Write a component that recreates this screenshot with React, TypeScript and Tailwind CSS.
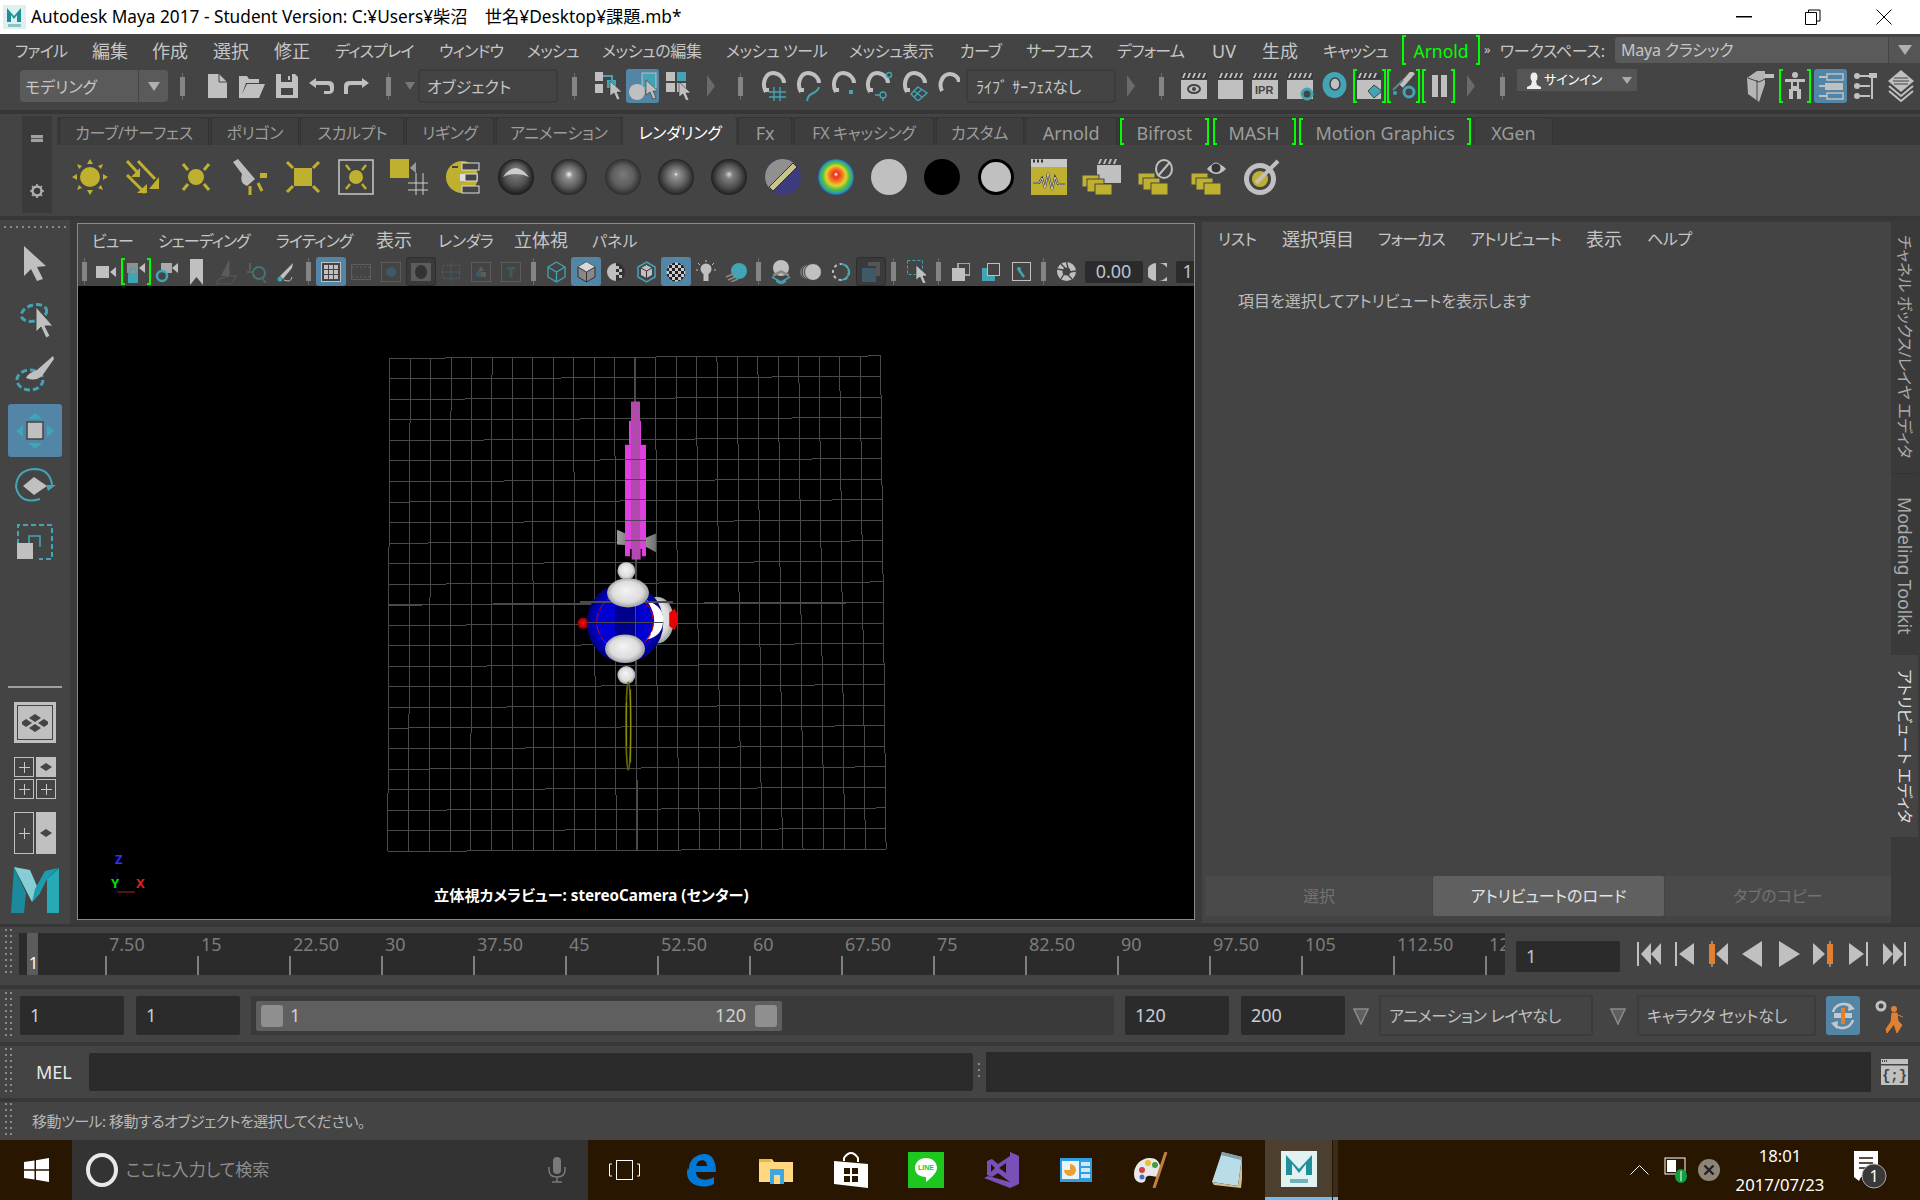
import React from "react";

const G = "#c0c0c0";
const T = "#41a5b5";
const Y = "#bfb030";
const O = "#e08030";

function Ic({ w, h, className = "", children }: { w: number; h: number; className?: string; children?: React.ReactNode }) {
  return (
    <svg width={w} height={h} viewBox={`0 0 ${w} ${h}`} fill="none" className={"shrink-0 " + className}>
      {children}
    </svg>
  );
}

// toolbar handle: thin line with a thicker bar over it
function Grip({ className = "w-[10px]" }: { className?: string }) {
  return (
    <div className={"flex justify-center shrink-0 " + className}>
      <div className="w-px h-[27px] bg-[#6a6a6a] flex items-center justify-center">
        <div className="w-[5px] h-[19px] shrink-0 bg-[#858585]" />
      </div>
    </div>
  );
}

function Dots({ h, className = "" }: { h: number; className?: string }) {
  const n = Math.floor(h / 6);
  return (
    <Ic w={7} h={h} className={className}>
      {Array.from({ length: n }).map((_, i) => (
        <g key={i} fill="#8a8a8a">
          <rect x={0} y={i * 6} width={2} height={2} />
          <rect x={5} y={i * 6} width={2} height={2} />
        </g>
      ))}
    </Ic>
  );
}

function HDots() {
  return (
    <Ic w={62} h={4}>
      {Array.from({ length: 11 }).map((_, i) => (
        <rect key={i} x={i * 6} y={1} width={2} height={2} fill="#8a8a8a" />
      ))}
    </Ic>
  );
}

function BrL() {
  return <div className="w-[4px] h-full shrink-0 border-l-2 border-y-2 border-[#00ff00]" />;
}
function BrR() {
  return <div className="w-[4px] h-full shrink-0 border-r-2 border-y-2 border-[#00ff00]" />;
}

function Cursor({ x, y, s = 1 }: { x: number; y: number; s?: number }) {
  return (
    <path
      transform={`translate(${x} ${y}) scale(${s})`}
      d="M0 0 L0 15 L4 12 L7 19 L10 18 L7 11 L12 11 Z"
      fill={G}
      stroke="#333"
      strokeWidth="0.6"
    />
  );
}

function Magnet({ children }: { children?: React.ReactNode }) {
  return (
    <>
      <path d="M5 21 C0 12 5 2 12 2 C18 2 23 7 23 12" stroke={G} strokeWidth="4" />
      <rect x="3" y="17" width="5" height="4" fill={G} />
      {children}
    </>
  );
}

function Clapper({ w = 28, children }: { w?: number; children?: React.ReactNode }) {
  return (
    <Ic w={w} h={30}>
      <rect x="1" y="2" width="26" height="6" fill="#3a3a3a" />
      {[2, 7, 12, 17, 22].map((x) => (
        <path key={x} d={`M${x} 7 L${x + 2} 2 H${x + 4} L${x + 2} 7 Z`} fill={G} />
      ))}
      <rect x="1" y="9" width="26" height="19" fill={G} />
      {children}
    </Ic>
  );
}

function Tri({ className }: { className: string }) {
  return (
    <Ic w={8} h={24} className={className}>
      <path d="M0 1 L8 12 L0 23 Z" fill="#6a6a6a" />
    </Ic>
  );
}

function TitleBar() {
  return (
    <div className="h-[34px] shrink-0 bg-white flex items-center text-black">
      <Ic w={23} h={24} className="ml-[3px]">
        <rect width="23" height="24" fill="#dff0ef" />
        <path d="M4 17 V3 L11 11 L18 3 V17 H14 V10 L11 14 L8 10 V17 Z" fill="#1f8f9c" />
        <rect x="5" y="19" width="13" height="3" fill="#8cc4c6" />
      </Ic>
      <span className="ml-[5px] text-[17.25px] whitespace-nowrap">Autodesk Maya 2017 - Student Version: C:¥Users¥柴沼　世名¥Desktop¥課題.mb*</span>
      <Ic w={16} h={2} className="ml-auto">
        <rect width="16" height="1.5" fill="#000" />
      </Ic>
      <Ic w={16} h={16} className="ml-[53px]">
        <path d="M3.5 3.5 V1 H15 V12 H12 M0.5 3.5 H11.5 V15.5 H0.5 Z" stroke="#000" />
      </Ic>
      <Ic w={16} h={16} className="ml-[55px] mr-[28px]">
        <path d="M0.5 0.5 L15.5 15.5 M15.5 0.5 L0.5 15.5" stroke="#000" />
      </Ic>
    </div>
  );
}

const KANA = "text-[16px] tracking-[-0.8px]";
const KANJI = "text-[18px]";
const MIXED = "text-[16px] tracking-[-0.4px]";

const MENU: [string, string, string][] = [
  ["ファイル", "w-[77px]", KANA],
  ["編集", "w-[60px]", KANJI],
  ["作成", "w-[61px]", KANJI],
  ["選択", "w-[61px]", KANJI],
  ["修正", "w-[61px]", KANJI],
  ["ディスプレイ", "w-[104px]", KANA],
  ["ウィンドウ", "w-[88px]", KANA],
  ["メッシュ", "w-[75px]", KANA],
  ["メッシュの編集", "w-[124px]", MIXED],
  ["メッシュ ツール", "w-[123px]", MIXED],
  ["メッシュ表示", "w-[111px]", MIXED],
  ["カーブ", "w-[66px]", KANA],
  ["サーフェス", "w-[91px]", KANA],
  ["デフォーム", "w-[95px]", KANA],
  ["UV", "w-[50px]", KANJI],
  ["生成", "w-[61px]", KANJI],
  ["キャッシュ", "w-[79px]", KANA],
];

function MenuBar() {
  return (
    <div className="h-[32px] shrink-0 flex items-center pl-[15px] text-[16px] text-[#c6c6c6]">
      {MENU.map(([label, cls, size]) => (
        <span key={label} className={cls + " " + size + " shrink-0 whitespace-nowrap pt-[2px]"}>
          {label}
        </span>
      ))}
      <div className="h-[30px] w-[78px] flex items-center justify-between shrink-0 text-[#00ff00] text-[17.5px]">
        <BrL />
        <span className="pt-[2px]">Arnold</span>
        <BrR />
      </div>
      <span className="ml-[4px] w-[16px] text-[13px]">»</span>
      <span className="whitespace-nowrap tracking-[-0.3px] pt-[2px]">ワークスペース:</span>
      <div className="ml-auto flex items-center h-[26px] w-[305px]">
        <div className="w-[273px] h-full bg-[#5a5a5a] rounded-l-sm pl-[6px] flex items-center tracking-[-0.2px]">Maya クラシック</div>
        <div className="ml-px flex-1 h-full bg-[#555] flex items-center justify-center">
          <Ic w={14} h={10}>
            <path d="M0 0 H14 L7 10 Z" fill="#b0b0b0" />
          </Ic>
        </div>
      </div>
    </div>
  );
}

function StatusLine() {
  return (
    <div className="h-[44px] shrink-0 flex items-center pl-[20px] pb-[4px] text-[16px] text-[#c6c6c6]">
      <div className="w-[148px] h-[32px] bg-[#5a5a5a] rounded-sm flex items-center">
        <span className="w-[118px] pl-[5px] pt-[2px]">モデリング</span>
        <div className="w-[30px] h-full border-l border-[#444] flex items-center justify-center">
          <Ic w={12} h={9}>
            <path d="M0 0 H12 L6 9 Z" fill="#b0b0b0" />
          </Ic>
        </div>
      </div>
      <Grip className="w-[10px] ml-[9px]" />
      <Ic w={19} h={24} className="ml-[21px]">
        <path d="M0 0 H11 L19 8 V24 H0 Z" fill={G} />
        <path d="M11 0 V8 H19" stroke="#444" />
      </Ic>
      <Ic w={26} h={24} className="ml-[12px]">
        <path d="M0 24 V2 H8 L10 5 H20 V9 H7 L3 20 L8 10 H26 L20 24 Z" fill={G} />
      </Ic>
      <Ic w={22} h={24} className="ml-[11px]">
        <path d="M0 0 H19 L22 3 V24 H0 Z" fill={G} />
        <rect x="5" y="0" width="11" height="8" fill="#444" />
        <rect x="5" y="14" width="12" height="7" fill="#444" />
        <rect x="12" y="2" width="2" height="4" fill={G} />
      </Ic>
      <Ic w={25} h={16} className="ml-[11px]">
        <path d="M7 0 L0 5 L7 10 V7 H18 Q21 7 21 10 V13 H15 V16 H19 Q25 16 25 11 V8 Q25 3 19 3 H7 Z" fill={G} />
      </Ic>
      <Ic w={25} h={16} className="ml-[10px]">
        <path d="M18 0 L25 5 L18 10 V7 H7 Q4 7 4 10 V16 H0 V8 Q0 3 6 3 H18 Z" fill={G} />
      </Ic>
      <Grip className="w-[10px] ml-[14px]" />
      <Ic w={10} h={8} className="ml-[12px]">
        <path d="M0 0 H10 L5 8 Z" fill="#777" />
      </Ic>
      <div className="ml-[3px] w-[140px] h-[34px] border-2 border-[#3c3c3c] rounded-sm pl-[7px] pt-[2px] flex items-center">オブジェクト</div>
      <Grip className="w-[10px] ml-[11px]" />
      <Ic w={28} h={28} className="ml-[16px]">
        <rect x="0" y="0" width="8" height="9" fill={G} />
        <rect x="0" y="12" width="8" height="9" fill={G} />
        <path d="M8 4 H17 V9" stroke={T} strokeWidth="2" />
        <rect x="12" y="8" width="9" height="8" fill={T} />
        <Cursor x={15} y={9} />
      </Ic>
      <div className="ml-[3px] w-[33px] h-[34px] bg-[#5285a6] rounded-[3px] flex items-center justify-center">
        <Ic w={29} h={28}>
          <rect x="14" y="1" width="14" height="15" fill={T} stroke={G} />
          <ellipse cx="9" cy="20" rx="8" ry="8" fill={G} />
          <Cursor x={18} y={8} />
        </Ic>
      </div>
      <Ic w={26} h={28} className="ml-[7px]">
        <rect x="0" y="0" width="9" height="9" fill={G} />
        <rect x="11" y="0" width="9" height="9" fill={T} />
        <rect x="0" y="11" width="9" height="9" fill={G} />
        <rect x="11" y="11" width="9" height="9" fill={G} />
        <Cursor x={13} y={10} />
      </Ic>
      <Tri className="ml-[15px]" />
      <Grip className="w-[10px] ml-[20px]" />
      <Ic w={25} h={30} className="ml-[16px]">
        <Magnet>
          <path d="M13 16 V30 M19 16 V30 M8 21 H25 M8 26 H25" stroke={T} strokeWidth="1.4" />
        </Magnet>
      </Ic>
      <Ic w={26} h={30} className="ml-[10px]">
        <Magnet>
          <path d="M23 16 C21 24 12 20 11 30" stroke={T} strokeWidth="2" />
        </Magnet>
      </Ic>
      <Ic w={25} h={30} className="ml-[9px]">
        <Magnet>
          <rect x="18" y="19" width="4" height="4" fill={T} />
        </Magnet>
      </Ic>
      <Ic w={28} h={30} className="ml-[9px]">
        <Magnet>
          <circle cx="24" cy="4" r="2.5" stroke={T} strokeWidth="1.4" />
          <circle cx="18" cy="24" r="3" stroke={T} strokeWidth="1.4" />
          <path d="M18 27 V30 M10 24 H15" stroke={T} strokeWidth="1.4" />
        </Magnet>
      </Ic>
      <Ic w={26} h={30} className="ml-[9px]">
        <Magnet>
          <path d="M16 16 L25 22 L16 30 L9 23 Z M12 20 L20 26 M20 18 L12 26" stroke={T} strokeWidth="1.4" />
        </Magnet>
      </Ic>
      <Ic w={22} h={30} className="ml-[10px]">
        <path d="M4 20 C0 12 5 3 12 3 C17 3 21 7 21 11" stroke={G} strokeWidth="4" />
      </Ic>
      <div className="ml-[6px] w-[150px] h-[34px] border-2 border-[#3c3c3c] rounded-sm pl-[8px] pt-[2px] flex items-center text-[16px] whitespace-nowrap">ﾗｲﾌﾞ ｻｰﾌｪｽなし</div>
      <Tri className="ml-[11px]" />
      <Grip className="w-[10px] ml-[21px]" />
      <div className="ml-[14px]">
        <Clapper>
          <ellipse cx="14" cy="18" rx="6" ry="4" stroke="#444" strokeWidth="2" />
          <circle cx="14" cy="18" r="2" fill="#444" />
        </Clapper>
      </div>
      <div className="ml-[9px] w-[26px] overflow-hidden">
        <Clapper />
      </div>
      <div className="ml-[8px] w-[27px] overflow-hidden">
        <Clapper>
          <text x="4" y="23" fontSize="11" fontWeight="700" fill="#444" fontFamily="Liberation Sans">IPR</text>
        </Clapper>
      </div>
      <div className="ml-[8px]">
        <Clapper>
          <circle cx="21" cy="23" r="5" fill="#444" stroke={T} strokeWidth="3" />
        </Clapper>
      </div>
      <Ic w={25} h={30} className="ml-[8px]">
        <ellipse cx="12.5" cy="14" rx="12" ry="13" fill={T} />
        <ellipse cx="13" cy="13" rx="5" ry="6" fill={G} stroke="#444" strokeWidth="1.5" />
      </Ic>
      <div className="ml-[6px] w-[33px] h-[34px] flex items-center justify-between">
        <BrL />
        <Ic w={25} h={28}>
          <g transform="translate(-1 -1)">
            <rect x="1" y="2" width="24" height="6" fill="#3a3a3a" />
            {[2, 7, 12, 17].map((x) => (
              <path key={x} d={`M${x} 7 L${x + 2} 2 H${x + 4} L${x + 2} 7 Z`} fill={G} />
            ))}
            <rect x="1" y="9" width="24" height="19" fill={G} />
            <path d="M18 14 L26 20 L18 27 L12 20 Z" fill={T} stroke="#444" />
          </g>
        </Ic>
        <BrR />
      </div>
      <div className="ml-[1px] w-[33px] h-[34px] flex items-center justify-between">
        <BrL />
        <Ic w={25} h={28}>
          <path d="M22 0 L10 14" stroke={G} strokeWidth="5" />
          <path d="M12 8 L2 18" stroke="#5a8a90" strokeWidth="2" />
          <circle cx="18" cy="20" r="5" stroke={T} strokeWidth="3" />
          <circle cx="4" cy="21" r="2" fill={T} />
        </Ic>
        <BrR />
      </div>
      <div className="ml-[2px] w-[33px] h-[34px] flex items-center justify-between">
        <BrL />
        <Ic w={22} h={24}>
          <rect x="4" y="1" width="6" height="22" fill={G} />
          <rect x="13" y="1" width="6" height="22" fill={G} />
        </Ic>
        <BrR />
      </div>
      <Tri className="ml-[12px]" />
      <Grip className="w-[10px] ml-[22px]" />
      <div className="ml-[10px] self-start mt-[3px] w-[120px] h-[22px] bg-[#555] flex items-center pl-[10px] text-[13px] text-white">
        <Ic w={14} h={17}>
          <ellipse cx="7" cy="5" rx="3.5" ry="4.5" fill="#eee" />
          <path d="M5 9 H9 L10 13 L14 15 V17 H0 V15 L4 13 Z" fill="#eee" />
        </Ic>
        <span className="ml-[3px] whitespace-nowrap">サインイン</span>
        <Ic w={10} h={7} className="ml-auto mr-[5px]">
          <path d="M0 0 H10 L5 7 Z" fill="#aaa" />
        </Ic>
      </div>
      <Ic w={27} h={32} className="ml-[110px]">
        <path d="M0 8 L10 1 H18 V14 L12 32 L1 24 Z" fill="#b5b5b5" />
        <path d="M10 10 V31 M1 8 L12 12 L20 8" stroke="#444" />
        <rect x="18" y="4" width="9" height="4" fill={G} />
      </Ic>
      <div className="ml-[5px] w-[32px] h-[34px] flex items-center justify-between">
        <BrL />
        <Ic w={22} h={28}>
          <circle cx="11" cy="3" r="3" fill={G} />
          <path d="M1 7 H21 V10 H15 V17 H17 V27 H13 V19 H9 V27 H5 V17 H7 V10 H1 Z" fill={G} />
          <rect x="9" y="10" width="4" height="4" fill="#444" />
        </Ic>
        <BrR />
      </div>
      <div className="ml-[3px] w-[33px] h-[34px] bg-[#5285a6] rounded-[3px] flex items-center justify-center">
        <Ic w={28} h={28}>
          <rect x="10" y="2" width="16" height="6" stroke={G} strokeWidth="1.5" />
          <path d="M2 5 H10" stroke={G} strokeWidth="2" />
          <rect x="8" y="11" width="18" height="7" fill={G} />
          <path d="M2 14 H8" stroke={G} strokeWidth="2" />
          <rect x="10" y="21" width="16" height="6" stroke={G} strokeWidth="1.5" />
          <path d="M2 24 H10" stroke={G} strokeWidth="2" />
        </Ic>
      </div>
      <Ic w={23} h={30} className="ml-[7px]">
        <circle cx="3" cy="5" r="3" fill={G} />
        <circle cx="3" cy="15" r="3" fill={G} />
        <circle cx="3" cy="25" r="3" fill={G} />
        <path d="M6 5 H16 M6 15 H16 M6 25 H16" stroke={G} strokeWidth="2" />
        <rect x="15" y="2" width="8" height="5" fill={G} />
        <path d="M18 5 V28" stroke={G} strokeWidth="2" />
      </Ic>
      <Ic w={26} h={32} className="ml-[11px]">
        <path d="M13 0 L26 11 L13 22 L0 11 Z" fill={G} />
        <path d="M5 11 H21 M6 8 H20 M6 14 H20" stroke="#444" />
        <path d="M1 16 L13 26 L25 16 M1 21 L13 31 L25 21" stroke={G} strokeWidth="2" />
      </Ic>
    </div>
  );
}

const TABS: { label: string; cls: string; active?: boolean; br?: boolean; latin?: boolean }[] = [
  { label: "カーブ/サーフェス", cls: "w-[150px]" },
  { label: "ポリゴン", cls: "w-[88px]" },
  { label: "スカルプト", cls: "w-[104px]" },
  { label: "リギング", cls: "w-[88px]" },
  { label: "アニメーション", cls: "w-[126px]" },
  { label: "レンダリング", cls: "w-[113px]", active: true },
  { label: "Fx", cls: "w-[54px]", latin: true },
  { label: "FX キャッシング", cls: "w-[140px]" },
  { label: "カスタム", cls: "w-[88px]" },
  { label: "Arnold", cls: "w-[92px]", latin: true },
  { label: "Bifrost", cls: "w-[91px]", br: true, latin: true },
  { label: "MASH", cls: "w-[85px]", br: true, latin: true },
  { label: "Motion Graphics", cls: "w-[174px]", br: true, latin: true },
  { label: "XGen", cls: "w-[79px]", latin: true },
];

function Sphere({ id, stops, fx = "50%", fy = "35%", children }: { id: string; stops: [string, string][]; fx?: string; fy?: string; children?: React.ReactNode }) {
  return (
    <Ic w={36} h={36}>
      <defs>
        <radialGradient id={id} cx="50%" cy="50%" r="50%" fx={fx} fy={fy}>
          {stops.map(([o, c]) => (
            <stop key={o} offset={o} stopColor={c} />
          ))}
        </radialGradient>
      </defs>
      <circle cx="18" cy="18" r="18" fill={`url(#${id})`} />
      {children}
    </Ic>
  );
}

function ShelfIcons() {
  const rays = (
    <path d="M5 5 L10 11 M31 5 L26 11 M5 31 L10 25 M31 31 L26 25" stroke={Y} strokeWidth="3" />
  );
  return (
    <div className="grid grid-cols-[repeat(23,53.3px)] pl-[6px] items-center justify-items-center h-[63px]">
      <Ic w={36} h={36}>
        <circle cx="18" cy="18" r="10" fill={Y} />
        <path d="M18 0 L21 5 H15 Z M18 36 L21 31 H15 Z M0 18 L5 15 V21 Z M36 18 L31 15 V21 Z M5 5 L10 7 L7 10 Z M31 5 L26 7 L29 10 Z M5 31 L10 29 L7 26 Z M31 31 L26 29 L29 26 Z" fill={Y} />
      </Ic>
      <Ic w={36} h={36}>
        <path d="M2 2 L13 14 M2 16 L20 34 M13 2 L30 20" stroke={Y} strokeWidth="3" />
        <path d="M15 9 V18 H6 Z M34 18 V30 H24 Z M22 25 V34 H12 Z" fill={Y} />
      </Ic>
      <Ic w={36} h={36}>
        <circle cx="18" cy="18" r="8" fill={Y} />
        {rays}
      </Ic>
      <Ic w={38} h={36}>
        <path d="M2 3 L7 0 L24 20 L16 27 Q8 24 11 15 Z" fill="#bdbdbd" />
        <rect x="29" y="14" width="7" height="5" fill={Y} />
        <path d="M19 27 V36 M27 24 L31 32" stroke={Y} strokeWidth="3" />
      </Ic>
      <Ic w={38} h={36}>
        <rect x="10" y="9" width="18" height="18" fill={Y} />
        <path d="M3 3 L9 9 M35 3 L29 9 M3 33 L9 27 M35 33 L29 27" stroke={Y} strokeWidth="3" />
      </Ic>
      <Ic w={36} h={36}>
        <rect x="1" y="1" width="34" height="34" stroke="#c8c8c8" strokeWidth="1.5" />
        <circle cx="18" cy="18" r="7" fill={Y} />
        <path d="M8 6 L12 11 M28 6 L24 11 M8 30 L12 25 M28 30 L24 25" stroke={Y} strokeWidth="2.5" />
      </Ic>
      <Ic w={38} h={36}>
        <rect x="0" y="0" width="19" height="19" fill={Y} />
        <path d="M20 9 L26 3 V14 Z" fill="#999" />
        <path d="M26 14 V36 M33 14 V36 M18 24 H38 M18 31 H38" stroke="#d0d0d0" />
      </Ic>
      <Ic w={34} h={36}>
        <circle cx="16" cy="18" r="16" fill={Y} />
        <rect x="16" y="4" width="17" height="7" fill="#444" stroke="#ddd" />
        <rect x="14" y="15" width="5" height="7" fill="#ddd" />
        <rect x="19" y="15" width="12" height="7" fill="#444" stroke="#ddd" />
        <rect x="16" y="27" width="17" height="7" fill="#444" stroke="#ddd" />
        <rect x="6" y="7" width="6" height="2" fill="#444" />
      </Ic>
      <Sphere id="s1" stops={[["0%", "#8a8a8a"], ["60%", "#555"], ["100%", "#1c1c1c"]]} fy="30%">
        <path d="M5 18 Q11 9 18 9 Q25 10 31 18 Q25 15 18 15 Q11 15 5 18 Z" fill="#dcdcdc" opacity="0.85" />
      </Sphere>
      <Sphere id="s2" stops={[["0%", "#f4f4f4"], ["22%", "#8e8e8e"], ["65%", "#5c5c5c"], ["100%", "#262626"]]} fy="42%" />
      <Sphere id="s3" stops={[["0%", "#7a7a7a"], ["60%", "#5e5e5e"], ["100%", "#2e2e2e"]]} fy="42%" />
      <Sphere id="s4" stops={[["0%", "#fff"], ["10%", "#9a9a9a"], ["60%", "#5c5c5c"], ["100%", "#242424"]]} fy="42%" />
      <Sphere id="s5" stops={[["0%", "#d8d8d8"], ["22%", "#7e7e7e"], ["65%", "#505050"], ["100%", "#1f1f1f"]]} fy="42%" />
      <Ic w={36} h={36}>
        <circle cx="18" cy="18" r="18" fill="#3c3c7c" />
        <path d="M18 0 A18 18 0 0 0 0 18 A18 18 0 0 0 5 30 L30 5 A18 18 0 0 0 18 0 Z" fill="#909090" />
        <path d="M4 28 L28 4 L32 8 L8 32 Z" fill="#c9c48a" stroke="#333" />
      </Ic>
      <Sphere
        id="s6"
        stops={[["0%", "#fff"], ["14%", "#f03020"], ["38%", "#f08020"], ["55%", "#e8d030"], ["75%", "#50c040"], ["90%", "#30a0a0"], ["100%", "#2060c0"]]}
        fy="42%"
      />
      <Ic w={36} h={36}>
        <circle cx="18" cy="18" r="18" fill="#c0c0c0" />
      </Ic>
      <Ic w={36} h={36}>
        <circle cx="18" cy="18" r="18" fill="#000" />
      </Ic>
      <Ic w={36} h={36}>
        <circle cx="18" cy="18" r="16.5" fill="#c0c0c0" stroke="#000" strokeWidth="3" />
      </Ic>
      <Ic w={36} h={36}>
        <rect width="36" height="36" fill={Y} />
        <rect width="36" height="8" fill="#c8c8c8" />
        <path d="M2 2 H4 M6 2 H8 M10 2 H12" stroke="#333" strokeWidth="3" />
        <path d="M2 24 H8 L11 19 L14 29 L17 14 L21 31 L24 18 L27 25 H34" stroke="#333" strokeWidth="2" />
        <path d="M2 24 H8 L11 19 L14 29 L17 14 L21 31 L24 18 L27 25 H34" stroke="#eee" strokeWidth="0.8" />
      </Ic>
      <Ic w={40} h={36}>
        <rect x="15" y="6" width="24" height="18" fill={G} />
        {[16, 21, 26, 31].map((x) => (
          <path key={x} d={`M${x} 5 L${x + 2} 0 H${x + 4} L${x + 2} 5 Z`} fill={G} />
        ))}
        <rect x="0" y="16" width="17" height="12" fill={Y} stroke="#444" />
        <rect x="5" y="20" width="17" height="13" fill={Y} stroke="#444" />
        <rect x="13" y="25" width="17" height="11" fill={Y} stroke="#444" />
      </Ic>
      <Ic w={36} h={36}>
        <ellipse cx="26" cy="10" rx="8" ry="9" stroke={G} strokeWidth="2" />
        <path d="M20 17 L32 3" stroke={G} strokeWidth="2" />
        <rect x="0" y="14" width="17" height="12" fill={Y} stroke="#444" />
        <rect x="5" y="19" width="17" height="12" fill={Y} stroke="#444" />
        <rect x="13" y="24" width="17" height="12" fill={Y} stroke="#444" />
      </Ic>
      <Ic w={36} h={36}>
        <path d="M16 10 Q25 -1 35 10 Q25 20 16 10 Z" fill={G} />
        <circle cx="25" cy="9" r="5" fill="#333" stroke={G} />
        <rect x="0" y="14" width="17" height="12" fill={Y} stroke="#444" />
        <rect x="5" y="19" width="17" height="12" fill={Y} stroke="#444" />
        <rect x="13" y="24" width="17" height="12" fill={Y} stroke="#444" />
      </Ic>
      <Ic w={36} h={36}>
        <circle cx="16" cy="20" r="16" fill={G} />
        <circle cx="16" cy="20" r="11" fill="#444" />
        <circle cx="16" cy="20" r="8" fill={Y} />
        <path d="M12 24 L34 2" stroke={G} strokeWidth="4" />
      </Ic>
    </div>
  );
}

function Shelf() {
  return (
    <div className="h-[102px] shrink-0 flex pl-[22px] text-[16px] tracking-[-0.3px]">
      <div className="w-[30px] mt-[2px] h-[97px] bg-[#3a3a3a] flex flex-col items-center pt-[19px]">
        <Ic w={12} h={7}>
          <rect width="12" height="7" fill="#a0a0a0" />
          <rect y="3" width="12" height="1" fill="#555" />
        </Ic>
        <Ic w={14} h={14} className="mt-[42px]">
          <circle cx="7" cy="7" r="4.5" stroke="#b0b0b0" strokeWidth="2.4" />
          <path d="M7 0 V2 M7 12 V14 M0 7 H2 M12 7 H14 M2 2 L3.5 3.5 M12 2 L10.5 3.5 M2 12 L3.5 10.5 M12 12 L10.5 10.5" stroke="#b0b0b0" strokeWidth="1.6" />
        </Ic>
      </div>
      <div className="ml-[5px] flex-1 flex flex-col">
        <div className="mt-[3px] h-[28px] shrink-0 bg-[#393939] flex pl-[2px] gap-[1.7px]">
          {TABS.map((t) => (
            <div
              key={t.label}
              className={
                t.cls +
                " shrink-0 h-full rounded-t-[3px] flex items-center justify-center whitespace-nowrap " +
                (t.latin ? "text-[18px] tracking-normal " : "") +
                (t.active ? "bg-[#444] text-white" : "bg-[#3e3e3e] text-[#9c9c9c] border-t border-x border-[#333]")
              }
            >
              {t.br ? <BrL /> : null}
              <span className="flex-1 text-center pt-[3px]">{t.label}</span>
              {t.br ? <BrR /> : null}
            </div>
          ))}
        </div>
        <ShelfIcons />
      </div>
    </div>
  );
}

function ToolBox() {
  return (
    <div className="w-[70px] shrink-0 bg-[#444] flex flex-col items-center pt-[5px]">
      <HDots />
      <Ic w={24} h={36} className="mt-[17px]">
        <path d="M1 0 V30 L8 23 L14 35 L20 33 L14 21 L23 20 Z" fill={G} />
      </Ic>
      <Ic w={36} h={38} className="mt-[20px] ml-[4px]">
        <ellipse cx="15" cy="11" rx="13" ry="8" transform="rotate(-15 15 11)" stroke={T} strokeWidth="3" strokeDasharray="6 3" />
        <path d="M17 5 V30 L22 25 L27 36 L31 34 L26 24 L34 24 Z" fill={G} stroke="#444" />
      </Ic>
      <Ic w={40} h={40} className="mt-[15px]">
        <ellipse cx="15" cy="25" rx="13" ry="10" stroke={T} strokeWidth="3" strokeDasharray="6 3" />
        <path d="M38 1 L22 15 Q13 18 11 23 Q20 27 27 21 L39 4 Z" fill={G} />
      </Ic>
      <div className="mt-[9px] w-[54px] h-[53px] bg-[#5285a6] rounded-[3px] flex items-center justify-center">
        <Ic w={40} h={38}>
          <rect x="12" y="10" width="16" height="17" fill={G} stroke="#444" strokeWidth="1.5" />
          <path d="M20 1 L27 7 H13 Z M20 37 L27 31 H13 Z M1 19 L8 13 V25 Z M39 19 L32 13 V25 Z" fill={T} />
        </Ic>
      </div>
      <Ic w={42} h={38} className="mt-[10px]">
        <path d="M26 32 Q6 38 2 20 Q3 2 22 2 Q36 3 38 18" stroke={T} strokeWidth="2" />
        <path d="M20 10 L33 19 L20 28 L9 19 Z" fill={G} />
        <path d="M34 24 L42 18 H32 Z" fill={T} />
      </Ic>
      <Ic w={36} h={36} className="mt-[19px]">
        <path d="M1 20 V1 H35 V35 H22" stroke={T} strokeWidth="2" strokeDasharray="5 3" />
        <path d="M12 20 V12 H23 V23" stroke={T} strokeWidth="1.6" />
        <rect x="0" y="19" width="16" height="16" fill={G} />
      </Ic>
      <div className="mt-[126px] w-[54px] h-[2px] bg-[#a0a0a0]" />
      <div className="mt-[14px] w-[42px] h-[41px] bg-[#c0c0c0] p-[3px] shrink-0">
        <div className="w-full h-full border border-[#444] flex items-center justify-center">
          <Ic w={26} h={18}>
            <path d="M13 0 L19 4 L13 8 L7 4 Z M4 5 L10 9 L4 13 L-2 9 Z M22 5 L28 9 L22 13 L16 9 Z M13 10 L19 14 L13 18 L7 14 Z" fill="#444" />
          </Ic>
        </div>
      </div>
      <div className="mt-[14px] w-[42px] grid grid-cols-2 gap-[2px] shrink-0">
        <Pane />
        <div className="h-[20px] bg-[#c0c0c0] flex items-center justify-center">
          <Ic w={12} h={8}>
            <path d="M6 0 L12 4 L6 8 L0 4 Z" fill="#444" />
          </Ic>
        </div>
        <Pane />
        <Pane />
      </div>
      <div className="mt-[13px] w-[42px] h-[42px] grid grid-cols-2 gap-[2px] shrink-0">
        <Pane />
        <div className="bg-[#c0c0c0] flex items-center justify-center">
          <Ic w={12} h={8}>
            <path d="M6 0 L12 4 L6 8 L0 4 Z" fill="#444" />
          </Ic>
        </div>
      </div>
      <Ic w={48} h={46} className="mt-[13px]">
        <path d="M0 46 L3 0 L15 26 L13 46 Z" fill="#1a8a9c" />
        <path d="M3 0 L19 3 L29 26 L21 35 Z" fill="#86cdd6" />
        <path d="M21 35 L29 26 L36 12 L47 1 L34 4 L24 22 Z" fill="#1c9cad" />
        <path d="M36 12 L48 1 V46 H36 Z" fill="#27a9b6" />
      </Ic>
    </div>
  );
}

function Pane() {
  return (
    <div className="min-h-[20px] border border-[#c0c0c0] flex items-center justify-center">
      <Ic w={11} h={11}>
        <path d="M5.5 0 V11 M0 5.5 H11" stroke="#c8c8c8" />
      </Ic>
    </div>
  );
}

// viewport toolbar
function Vt({ active, dark, children }: { active?: boolean; dark?: boolean; children?: React.ReactNode }) {
  return (
    <div
      className={
        "w-[30px] h-[29px] shrink-0 flex items-center justify-center rounded-[3px] " +
        (active ? "bg-[#5285a6] " : "") +
        (dark ? "bg-[#3a3a3a] border border-[#2e2e2e] " : "")
      }
    >
      {children}
    </div>
  );
}

const DIM = "#5c5c5c";

function ViewToolbar() {
  return (
    <div className="h-[29px] shrink-0 flex items-center overflow-hidden">
      <Grip className="w-[13px]" />
      <Vt>
        <Ic w={20} h={14}>
          <rect y="1" width="13" height="12" fill={G} />
          <path d="M14 7 L20 2 V12 Z" fill={G} />
        </Ic>
      </Vt>
      <div className="w-[30px] h-[27px] shrink-0 flex items-center justify-between">
        <BrL />
        <Ic w={20} h={24}>
          <rect x="1" y="3" width="11" height="10" fill="#909090" />
          <path d="M13 8 L19 3 V13 Z" fill={G} />
          <rect x="2" y="13" width="10" height="10" rx="1" fill={T} />
          <path d="M4 13 V10 Q7 6 10 10 V13" stroke={T} strokeWidth="1.5" />
        </Ic>
        <BrR />
      </div>
      <Vt>
        <Ic w={23} h={22}>
          <rect x="6" y="2" width="11" height="10" fill="#aaa" />
          <path d="M17 7 L23 2 V12 Z" fill={G} />
          <circle cx="7" cy="15" r="5" fill="#444" stroke={T} strokeWidth="2.5" />
        </Ic>
      </Vt>
      <Vt>
        <Ic w={13} h={26}>
          <path d="M0 0 H13 V26 L6.5 18 L0 26 Z" fill={G} />
        </Ic>
      </Vt>
      <Vt>
        <Ic w={21} h={24}>
          <path d="M13 0 V16 L3 19 L0 24 H15 L21 16 H14" stroke={DIM} />
          <path d="M13 0 L5 16 H13 Z" fill={DIM} />
        </Ic>
      </Vt>
      <Vt>
        <Ic w={21} h={22}>
          <circle cx="13" cy="12" r="6" stroke={T} strokeOpacity="0.5" strokeWidth="2" />
          <path d="M4 9 V2 M1 11 H8 M16 17 L20 22" stroke={DIM} strokeWidth="2" />
        </Ic>
      </Vt>
      <Vt>
        <Ic w={18} h={22}>
          <path d="M16 2 L7 11 L3 15 L6 18 L15 7 Z" fill={G} />
          <circle cx="3" cy="18" r="2.5" fill={T} />
          <path d="M7 19 Q14 22 15 16" stroke={G} />
        </Ic>
      </Vt>
      <Grip className="w-[15px]" />
      <Vt active>
        <Ic w={20} h={20}>
          <rect x="0.5" y="0.5" width="19" height="19" fill="#444" stroke={G} />
          {[3, 8, 13].map((x) => [3, 8, 13].map((y) => <rect key={x + "-" + y} x={x} y={y} width="4" height="4" fill={G} />))}
        </Ic>
      </Vt>
      <Vt>
        <Ic w={20} h={20}>
          <rect x="0.5" y="2.5" width="19" height="15" stroke={DIM} />
          <path d="M1 5 H19 M1 15 H19" stroke={DIM} strokeDasharray="2 2" />
        </Ic>
      </Vt>
      <Vt>
        <Ic w={20} h={20}>
          <rect x="0.5" y="0.5" width="19" height="19" stroke={DIM} />
          <ellipse cx="10" cy="10" rx="5" ry="5" fill="#3d5a66" />
        </Ic>
      </Vt>
      <Vt dark>
        <Ic w={20} h={20}>
          <rect x="0" y="1" width="20" height="18" fill={DIM} />
          <ellipse cx="10" cy="10" rx="6" ry="7" fill="#333" />
        </Ic>
      </Vt>
      <Vt>
        <Ic w={20} h={20}>
          <path d="M10 0 V20 M0 10 H20" stroke="#3d5a66" />
          <rect x="1.5" y="3.5" width="17" height="13" stroke={DIM} strokeDasharray="2 2" />
        </Ic>
      </Vt>
      <Vt>
        <Ic w={20} h={20}>
          <rect x="0.5" y="0.5" width="19" height="19" stroke={DIM} />
          <path d="M10 4 L13 9 H7 Z" fill={DIM} />
          <circle cx="8" cy="12" r="3" fill="#3d5a66" />
          <rect x="10" y="10" width="5" height="5" fill={DIM} />
        </Ic>
      </Vt>
      <Vt>
        <Ic w={20} h={20}>
          <rect x="0.5" y="0.5" width="19" height="19" stroke={DIM} />
          <path d="M6 5 H14 V7.5 H11.5 V15 H8.5 V7.5 H6 Z" fill="#3d5a66" />
        </Ic>
      </Vt>
      <Grip className="w-[15px]" />
      <Vt>
        <Ic w={19} h={22}>
          <path d="M9.5 1 L18 6 V16 L9.5 21 L1 16 V6 Z M1 6 L9.5 11 L18 6 M9.5 11 V21" stroke={T} strokeWidth="1.3" />
        </Ic>
      </Vt>
      <Vt active>
        <Ic w={19} h={22}>
          <path d="M9.5 1 L18 6 V16 L9.5 21 L1 16 V6 Z" fill="#888" stroke="#333" />
          <path d="M9.5 1 L18 6 L9.5 11 L1 6 Z" fill="#d8d8d8" />
          <path d="M1 6 L9.5 11 L18 6 M9.5 11 V21" stroke="#333" />
        </Ic>
      </Vt>
      <Vt>
        <Ic w={18} h={18}>
          <path d="M9 0 A9 9 0 0 0 9 18 Z" fill={G} />
          <path d="M9 0 A9 9 0 0 1 9 18 Z" fill="#303030" />
          <path d="M9 3 H12 V6 H9 Z M12 6 H15 V9 H12 Z M9 9 H12 V12 H9 Z M12 12 H15 V15 H12 Z" fill={G} />
        </Ic>
      </Vt>
      <Vt>
        <Ic w={19} h={22}>
          <path d="M9.5 1 L18 6 V16 L9.5 21 L1 16 V6 Z" stroke={T} strokeWidth="1.5" />
          <path d="M9.5 4 L15 7 L15 14 L9.5 17 L4 14 V7 Z" fill={G} />
          <path d="M4 7 L9.5 10 L15 7 M9.5 10 V17" stroke="#333" />
        </Ic>
      </Vt>
      <Vt active>
        <Ic w={20} h={20}>
          <defs>
            <pattern id="ck" width="6" height="6" patternUnits="userSpaceOnUse">
              <rect width="6" height="6" fill="#ccc" />
              <rect width="3" height="3" fill="#222" />
              <rect x="3" y="3" width="3" height="3" fill="#222" />
            </pattern>
          </defs>
          <circle cx="10" cy="10" r="9.5" fill="url(#ck)" />
        </Ic>
      </Vt>
      <Vt>
        <Ic w={20} h={24}>
          <circle cx="10" cy="9" r="5.5" fill={G} />
          <rect x="7.5" y="14" width="5" height="7" fill={G} />
          <path d="M10 0 V2 M2 3 L4 5 M18 3 L16 5 M0 10 H2 M18 10 H20" stroke={G} />
        </Ic>
      </Vt>
      <Vt>
        <Ic w={22} h={20}>
          <circle cx="14" cy="9" r="8" fill={T} />
          <path d="M1 15 L8 12 M3 18 L10 15 M6 20 L13 17" stroke="#8a8a8a" strokeWidth="1.5" />
        </Ic>
      </Vt>
      <Grip className="w-[15px]" />
      <Vt>
        <Ic w={20} h={24}>
          <circle cx="10" cy="8" r="8" fill={G} />
          <path d="M2 14 L10 10 L18 14 L18 17 L10 13 L2 17 Z" fill="#888" />
          <path d="M1 17 L10 22 L19 17 M5 21 L10 24 L15 21" stroke={T} strokeWidth="1.5" />
        </Ic>
      </Vt>
      <Vt>
        <Ic w={22} h={18}>
          <circle cx="7" cy="9" r="7" fill="#777" />
          <circle cx="10" cy="9" r="8" fill="#999" stroke="#444" />
          <circle cx="13" cy="9" r="8.5" fill={G} stroke="#444" />
        </Ic>
      </Vt>
      <Vt>
        <Ic w={18} h={18}>
          <circle cx="9" cy="9" r="8" stroke={G} strokeWidth="2" strokeDasharray="3 3" />
          <path d="M9 1 A8 8 0 0 1 9 17" stroke={T} strokeWidth="2" />
        </Ic>
      </Vt>
      <Vt dark>
        <Ic w={18} h={20}>
          <path d="M6 0 H18 V14 H14 V4 H6 Z" fill="#555" />
          <rect x="0" y="6" width="14" height="14" fill="#3d5a66" />
        </Ic>
      </Vt>
      <Grip className="w-[15px]" />
      <Vt>
        <Ic w={19} h={23}>
          <rect x="0.5" y="0.5" width="15" height="14" stroke={T} strokeDasharray="3 2" />
          <Cursor x={9} y={5} />
        </Ic>
      </Vt>
      <Grip className="w-[15px]" />
      <Vt>
        <Ic w={18} h={18}>
          <rect x="6" y="0" width="12" height="12" stroke={G} strokeWidth="1.5" />
          <rect x="0" y="5" width="13" height="13" fill={G} />
        </Ic>
      </Vt>
      <Vt>
        <Ic w={18} h={18}>
          <rect x="0" y="5" width="13" height="13" fill={T} />
          <rect x="5.5" y="0.5" width="12" height="12" fill="#444" stroke={G} />
        </Ic>
      </Vt>
      <Vt>
        <Ic w={19} h={19}>
          <rect x="0.5" y="0.5" width="18" height="18" stroke={G} />
          <circle cx="7" cy="7" r="2" fill={T} />
          <path d="M7 8 L12 15" stroke={T} strokeWidth="2.5" />
        </Ic>
      </Vt>
      <Grip className="w-[15px]" />
      <Vt>
        <Ic w={19} h={19}>
          <circle cx="9.5" cy="9.5" r="9.5" fill={G} />
          <circle cx="9.5" cy="9.5" r="4" fill="#444" />
          <path d="M9.5 0 L11 6 M19 9 L13 10 M15 17 L11 13 M4 17 L7 12 M0 7 L6 8 M4 2 L8 6" stroke="#444" strokeWidth="1.4" />
        </Ic>
      </Vt>
      <div className="ml-[3.5px] w-[58px] h-[22px] shrink-0 bg-[#2b2b2b] rounded-[2px] flex items-center justify-center text-[18px] text-[#b8c6d0]">0.00</div>
      <Vt>
        <Ic w={19} h={18}>
          <path d="M8 0 A9 9 0 0 0 8 18 Z" fill={G} />
          <path d="M11 0 H19 V18 H11 A9 9 0 0 0 11 0 Z" fill={G} />
        </Ic>
      </Vt>
      <div className="ml-[3px] w-[30px] h-[22px] shrink-0 bg-[#2b2b2b] rounded-[2px] pl-[7px] text-[18px] text-[#b8c6d0] flex items-center">1</div>
    </div>
  );
}

function Scene() {
  const verticals = Array.from({ length: 25 }).map((_, i) => ({
    x1: 28 + 61.46 * i,
    y1: 25 - (7 * i) / 24,
    x2: 22 + 62.4 * i,
    y2: 1507 - (7 * i) / 24,
  }));
  const horizontals = Array.from({ length: 25 }).map((_, j) => ({
    x1: 28 - (6 * j) / 24,
    y1: 25 + 61.75 * j,
    x2: 1503 + (17 * j) / 24,
    y2: 18 + 61.75 * j,
  }));
  return (
    <svg className="absolute inset-0 w-full h-full" viewBox="77 286 1118 634">
      <defs>
        <radialGradient id="wht" cx="50%" cy="50%" r="55%" fx="45%" fy="40%">
          <stop offset="0%" stopColor="#f4f4f4" />
          <stop offset="65%" stopColor="#dcdcdc" />
          <stop offset="100%" stopColor="#8c8c8c" />
        </radialGradient>
        <radialGradient id="blu" cx="50%" cy="50%" r="50%">
          <stop offset="0%" stopColor="#0000d8" />
          <stop offset="75%" stopColor="#0000d0" />
          <stop offset="100%" stopColor="#000078" />
        </radialGradient>
        <radialGradient id="red" cx="50%" cy="50%" r="50%">
          <stop offset="0%" stopColor="#ff1010" />
          <stop offset="100%" stopColor="#900000" />
        </radialGradient>
        <linearGradient id="fan" x1="0" x2="1" y1="0" y2="0">
          <stop offset="0%" stopColor="#a0a0a0" />
          <stop offset="100%" stopColor="#707070" />
        </linearGradient>
      </defs>
      <g transform="translate(380 350) scale(0.33333)">
        <g stroke="#4a4a4a" strokeWidth="3" shapeRendering="crispEdges">
          {verticals.map((l, i) => (
            <line key={i} {...l} strokeWidth={i === 12 ? 5 : 3} />
          ))}
          {horizontals.map((l, j) => (
            <line key={j} {...l} strokeWidth={j === 12 ? 5 : 3} />
          ))}
        </g>
        {/* right hand sphere behind the body */}
        <ellipse cx="832" cy="812" rx="50" ry="70" fill="url(#wht)" />
        <path d="M868 790 L884 778 Q905 805 884 842 L868 830 Z" fill="#ee0000" />
        <circle cx="609" cy="821" r="17" fill="url(#red)" />
        <ellipse cx="735" cy="820" rx="115" ry="120" fill="url(#blu)" />
        <path d="M800 752 Q845 815 800 870 Q850 860 850 810 Q850 770 800 752 Z" fill="#ffffff" />
        <circle cx="735" cy="818" r="85" fill="none" stroke="#d00000" strokeWidth="3" strokeDasharray="30 8" />
        <rect x="705" y="770" width="65" height="100" fill="#00008c" />
        <g stroke="#4a4a4a" strokeWidth="3" shapeRendering="crispEdges">
          <line x1="620" y1="820" x2="850" y2="818" />
          <line x1="767" y1="700" x2="767" y2="940" />
          <line x1="600" y1="757" x2="880" y2="757" strokeWidth="4.5" />
        </g>
        <circle cx="739" cy="664" r="27" fill="url(#wht)" />
        <circle cx="739" cy="977" r="27" fill="url(#wht)" />
        <ellipse cx="744" cy="730" rx="63" ry="44" fill="url(#wht)" />
        <ellipse cx="735" cy="898" rx="60" ry="43" fill="url(#wht)" />
        {/* fins */}
        <path d="M711 540 L755 560 V588 L711 585 Z" fill="url(#fan)" />
        <path d="M828 552 L785 570 V585 L828 608 Z" fill="url(#fan)" />
        {/* rocket body */}
        <rect x="735" y="285" width="63" height="335" fill="#e040e0" />
        <rect x="747" y="213" width="36" height="72" fill="#e040e0" />
        <rect x="753" y="155" width="27" height="441" fill="#b04aac" />
        <rect x="755" y="596" width="27" height="34" fill="#b04aac" />
        <rect x="750" y="598" width="5" height="22" fill="#000" />
        <rect x="782" y="598" width="4" height="22" fill="#000" />
        <g stroke="#5c3c5c" strokeWidth="3" shapeRendering="crispEdges">
          {[328, 390, 450, 512, 572].map((y) => (
            <line key={y} x1="735" y1={y} x2="798" y2={y} />
          ))}
        </g>
        {/* tail */}
        <ellipse cx="745" cy="1130" rx="7" ry="132" fill="none" stroke="#6a6a00" strokeWidth="5" />
        <path d="M740 1060 V1190 M752 1020 V1240" stroke="#b0b000" strokeWidth="2" />
      </g>
      <path d="M116 893 H134" stroke="#c02020" />
      <path d="M116 893 V874" stroke="#101060" />
    </svg>
  );
}

function Viewport() {
  return (
    <div className="w-[1118px] shrink-0 mt-[3px] mb-[4px] bg-[#444] border border-[#8a8a8a] flex flex-col overflow-hidden">
      <div className="h-[33px] shrink-0 flex items-center pl-[14px] text-[16px] text-[#c6c6c6] whitespace-nowrap tracking-[-1px]">
        <span className="w-[66px]">ビュー</span>
        <span className="w-[118px]">シェーディング</span>
        <span className="w-[100px]">ライティング</span>
        <span className="w-[62px] text-[18px] tracking-normal">表示</span>
        <span className="w-[76px] tracking-[-0.3px]">レンダラ</span>
        <span className="w-[78px] text-[18px] tracking-normal">立体視</span>
        <span className="tracking-normal">パネル</span>
      </div>
      <ViewToolbar />
      <div className="flex-1 bg-black relative">
        <Scene />
        <span className="absolute left-[37px] top-[567px] text-[#3030ff] text-[13px] font-bold leading-none">Z</span>
        <span className="absolute left-[33px] top-[591px] text-[#00e000] text-[13px] font-bold leading-none">Y</span>
        <span className="absolute left-[58px] top-[591px] text-[#e02020] text-[13px] font-bold leading-none">X</span>
        <span className="absolute left-[356px] top-[602px] text-white text-[15.2px] font-bold whitespace-nowrap leading-none">
          立体視カメラビュー: stereoCamera (センター)
        </span>
      </div>
    </div>
  );
}

function AttributePanel() {
  return (
    <div className="w-[689px] ml-[7px] shrink-0 bg-[#444] flex flex-col mt-[2px] mb-px">
      <div className="h-[34px] shrink-0 flex items-center pl-[16px] text-[16px] text-[#c6c6c6] whitespace-nowrap tracking-[-0.4px]">
        <span className="w-[64px]">リスト</span>
        <span className="w-[96px] text-[18px] tracking-normal">選択項目</span>
        <span className="w-[92px] tracking-[-0.8px]">フォーカス</span>
        <span className="w-[116px] tracking-[-0.8px]">アトリビュート</span>
        <span className="w-[61px] text-[18px] tracking-normal">表示</span>
        <span>ヘルプ</span>
      </div>
      <div className="pl-[36px] mt-[33px] text-[16px] text-[#bcbcbc]">項目を選択してアトリビュートを表示します</div>
      <div className="mt-auto flex gap-[1px] h-[40px] mb-[7px] ml-[4px] text-[16px]">
        <div className="w-[226px] bg-[#4a4a4a] flex items-center justify-center text-[#727272]">選択</div>
        <div className="w-[231px] bg-[#606060] rounded-[2px] flex items-center justify-center text-[#e4e4e4]">アトリビュートのロード</div>
        <div className="flex-1 bg-[#4a4a4a] flex items-center justify-center text-[#727272]">タブのコピー</div>
      </div>
    </div>
  );
}

function SideTabs() {
  const cls = "[writing-mode:vertical-rl] [text-orientation:sideways] whitespace-nowrap text-[16px] tracking-[-0.2px]";
  return (
    <div className="flex-1 flex flex-col pt-[1px] mb-px">
      <div className="h-[253px] bg-[#3a3a3a] rounded-tl-[3px] mr-[2px] flex items-center justify-center text-[#aaa] border-b border-[#333]">
        <span className={cls}>チャネル ボックス/レイヤ エディタ</span>
      </div>
      <div className="h-[179px] mt-[2px] bg-[#3a3a3a] mr-[2px] flex items-center justify-center text-[#aaa]">
        <span className={cls + " !text-[18px]"}>Modeling Toolkit</span>
      </div>
      <div className="h-[182px] bg-[#444] mr-[2px] flex items-center justify-center text-[#ddd]">
        <span className={cls}>アトリビュート エディタ</span>
      </div>
      <div className="flex-1 bg-[#3a3a3a] mr-[2px]" />
    </div>
  );
}

const RULER = ["7.50", "15", "22.50", "30", "37.50", "45", "52.50", "60", "67.50", "75", "82.50", "90", "97.50", "105", "112.50", "120"];

function TimeSlider() {
  return (
    <div className="h-[58px] shrink-0 flex items-center pl-[5px] pb-[4px]">
      <Dots h={50} />
      <div className="ml-[7px] w-[1486px] h-[42px] bg-[#2b2b2b] flex overflow-hidden">
        <div className="ml-[8px] w-[11px] h-full bg-[#5c5c5c] shrink-0 text-white text-[16px] flex items-end leading-none pb-[4px] pl-[2px]">1</div>
        <div className="w-[67px] shrink-0" />
        {RULER.map((t) => (
          <div key={t} className="w-[92px] h-full shrink-0 relative">
            <span className="ml-[4px] text-[18px] leading-[22px] text-[#7c7c7c] whitespace-nowrap">{t}</span>
            <div className="absolute left-0 bottom-0 h-[19px] w-[2px] bg-[#808080]" />
          </div>
        ))}
      </div>
      <div className="ml-[11px] mt-[5px] w-[104px] h-[31px] bg-[#2b2b2b] rounded-[2px] pl-[10px] flex items-center text-[18px] text-[#b8c6d0]">1</div>
      <Ic w={269} h={26} className="ml-[17px]">
        <path d="M1 1 V25" stroke={G} strokeWidth="2" />
        <path d="M14 2 L4 13 L14 24 Z M24 2 L14 13 L24 24 Z" fill={G} />
        <path d="M39 1 V25" stroke={G} strokeWidth="2" />
        <path d="M57 2 L42 13 L57 24 Z" fill={G} />
        <path d="M75 -2 V28" stroke="#d0d0d0" />
        <rect x="72" y="3" width="6" height="20" fill={O} />
        <path d="M91 2 L79 13 L91 24 Z" fill={G} />
        <path d="M125 0 L105 13 L125 26 Z" fill={G} />
        <path d="M142 0 L163 13 L142 26 Z" fill={G} />
        <path d="M176 2 L188 13 L176 24 Z" fill={G} />
        <path d="M193 -2 V28" stroke="#d0d0d0" />
        <rect x="190" y="3" width="6" height="20" fill={O} />
        <path d="M212 2 L227 13 L212 24 Z" fill={G} />
        <path d="M230 1 V25" stroke={G} strokeWidth="2" />
        <path d="M246 2 L256 13 L246 24 Z M256 2 L266 13 L256 24 Z" fill={G} />
        <path d="M268 1 V25" stroke={G} strokeWidth="2" />
      </Ic>
    </div>
  );
}

function NumField({ v, className = "" }: { v: string; className?: string }) {
  return (
    <div className={"w-[104px] h-[39px] shrink-0 bg-[#2b2b2b] rounded-[2px] pl-[10px] flex items-center text-[18px] text-[#c4ced6] " + className}>{v}</div>
  );
}

function DownArrow({ className }: { className: string }) {
  return (
    <Ic w={16} h={18} className={className}>
      <path d="M1 2 H15 L8 17 Z" fill="#5f5f5f" stroke="#8a8a8a" strokeWidth="1.5" />
    </Ic>
  );
}

function RangeSlider() {
  return (
    <div className="h-[53px] shrink-0 flex items-center pl-[5px]">
      <Dots h={48} />
      <NumField v="1" className="ml-[8px]" />
      <NumField v="1" className="ml-[12px]" />
      <div className="ml-[11px] w-[863px] h-[39px] bg-[#3a3a3a] flex items-center pl-[5px] shrink-0">
        <div className="w-[526px] h-[30px] bg-[#5f5f5f] rounded-[2px] flex items-center px-[5px] text-[18px] text-[#d0d0d0]">
          <div className="w-[22px] h-[22px] bg-[#8f8f8f] rounded-[3px]" />
          <span className="ml-[7px]">1</span>
          <span className="ml-auto mr-[9px]">120</span>
          <div className="w-[22px] h-[22px] bg-[#8f8f8f] rounded-[3px]" />
        </div>
      </div>
      <NumField v="120" className="ml-[11px]" />
      <NumField v="200" className="ml-[12px]" />
      <DownArrow className="ml-[8px]" />
      <div className="ml-[10px] w-[214px] h-[41px] shrink-0 border-2 border-[#3c3c3c] rounded-[2px] pl-[8px] flex items-center text-[16px] text-[#c0c0c0] whitespace-nowrap tracking-[-0.3px]">アニメーション レイヤなし</div>
      <DownArrow className="ml-[17px]" />
      <div className="ml-[11px] w-[179px] h-[41px] shrink-0 border-2 border-[#3c3c3c] rounded-[2px] pl-[8px] flex items-center text-[16px] text-[#c0c0c0] whitespace-nowrap tracking-[-0.3px]">キャラクタ セットなし</div>
      <div className="ml-[10px] w-[34px] h-[39px] bg-[#5285a6] rounded-[3px] flex items-center justify-center shrink-0">
        <Ic w={26} h={32}>
          <path d="M22 8 A11 11 0 0 0 3 12 M4 24 A11 11 0 0 0 23 20" stroke="#c8c8c8" strokeWidth="2.5" />
          <path d="M19 3 L25 9 L18 11 Z M7 29 L1 23 L8 21 Z" fill="#c8c8c8" />
          <rect x="4" y="13" width="18" height="5" fill="#c8c8c8" />
          <rect x="11" y="8" width="4" height="16" fill={O} />
        </Ic>
      </div>
      <Ic w={30} h={34} className="ml-[14px]">
        <circle cx="7" cy="7" r="4" stroke={G} strokeWidth="3" />
        <circle cx="20" cy="10" r="3" fill={O} />
        <path d="M18 14 L23 14 L24 22 L28 26 L23 34 L20 25 L13 34 L12 30 L17 23 Z M24 16 L29 18" fill={O} stroke={O} />
      </Ic>
    </div>
  );
}

function CommandLine() {
  return (
    <div className="h-[52px] shrink-0 flex items-center pl-[5px]">
      <Dots h={48} />
      <span className="ml-[24px] w-[53px] text-[18px] text-[#e8e8e8]">MEL</span>
      <div className="w-[884px] h-[38px] bg-[#2b2b2b] rounded-[2px] shrink-0" />
      <Ic w={2} h={18} className="ml-[5px]">
        {[0, 6, 12].map((y) => (
          <rect key={y} y={y} width="2" height="2" fill="#8a8a8a" />
        ))}
      </Ic>
      <div className="ml-[6px] w-[885px] h-[40px] bg-[#2b2b2b] shrink-0" />
      <Ic w={27} h={26} className="ml-[10px]">
        <rect width="27" height="26" fill={G} />
        <rect y="5" width="27" height="1.5" fill="#444" />
        <path d="M1 2 H7" stroke="#444" strokeDasharray="1 1" strokeWidth="2" />
        <text x="13.5" y="21" textAnchor="middle" fontSize="14" fontWeight="700" fill="#444" fontFamily="Liberation Mono">{"{;}"}</text>
      </Ic>
    </div>
  );
}

function HelpLine() {
  return (
    <div className="h-[38px] shrink-0 flex items-center pl-[5px]">
      <Dots h={36} />
      <span className="ml-[20px] text-[15px] tracking-[-0.5px] text-[#b8b8b8]">移動ツール: 移動するオブジェクトを選択してください。</span>
    </div>
  );
}

function Taskbar() {
  return (
    <div className="h-[60px] shrink-0 bg-[#281600] flex items-center text-white">
      <div className="w-[72px] shrink-0 flex justify-center">
        <Ic w={25} h={24}>
          <path d="M0 4 L10.5 2.5 V11.2 H0 Z M12 2.3 L25 0 V11.2 H12 Z M0 12.8 H10.5 V21.5 L0 20 Z M12 12.8 H25 V24 L12 21.8 Z" fill="#fff" />
        </Ic>
      </div>
      <div className="w-[516px] h-full shrink-0 bg-[#333] flex items-center pl-[14px]">
        <Ic w={32} h={34}>
          <ellipse cx="16" cy="17" rx="14" ry="15" stroke="#e8e8e8" strokeWidth="4" />
        </Ic>
        <span className="ml-[8px] text-[17px] text-[#8c8c8c]">ここに入力して検索</span>
        <Ic w={18} h={26} className="ml-auto mr-[22px]">
          <rect x="5" y="0" width="8" height="17" rx="4" fill="#7a7a7a" />
          <path d="M1 10 V13 Q1 20 9 20 Q17 20 17 13 V10 M9 20 V25 M4 25 H14" stroke="#7a7a7a" strokeWidth="1.5" />
        </Ic>
      </div>
      <Ic w={31} h={20} className="ml-[21px]">
        <rect x="7.5" y="0.5" width="16" height="19" stroke="#fff" />
        <path d="M3 4 H0.5 V16 H3 M28 4 H30.5 V16 H28" stroke="#fff" />
      </Ic>
      <Ic w={30} h={34} className="ml-[46px]">
        <path d="M3 17 C2 6 12 0 20 1 C27 2 30 9 30 19 H10 C10 27 20 29 28 24 V31 C16 37 1 32 1 20 C1 16 2 14 3 17 Z M10 13 H21 C21 6 12 5 10 13 Z" fill="#0078d7" fillRule="evenodd" />
      </Ic>
      <Ic w={34} h={28} className="ml-[43px]">
        <path d="M0 3 H13 L15 6 H34 V26 H0 Z" fill="#ffd880" />
        <rect x="0" y="3" width="12" height="3" fill="#e8b840" />
        <rect x="11" y="13" width="14" height="15" fill="#3ea6e0" />
        <rect x="15" y="19" width="6" height="9" fill="#ffd880" />
      </Ic>
      <Ic w={34} h={36} className="ml-[41px]">
        <path d="M0 9 L34 12 V36 L0 32 Z" fill="#fff" />
        <path d="M10 9 V6 Q17 -4 24 6 V10" stroke="#fff" strokeWidth="2" />
        <rect x="10" y="16" width="6" height="6" fill="#281600" />
        <rect x="18" y="16" width="6" height="6" fill="#281600" />
        <rect x="10" y="24" width="6" height="6" fill="#281600" />
        <rect x="18" y="24" width="6" height="6" fill="#281600" />
      </Ic>
      <div className="ml-[40px] w-[36px] h-[36px] shrink-0 bg-[#1ec71e] flex items-center justify-center">
        <Ic w={22} h={24}>
          <path d="M11 0 C17 0 22 4 22 10 C22 15 15 21 11 24 V19 C4 19 0 15 0 10 C0 4 5 0 11 0 Z" fill="#fff" />
          <text x="11" y="12" textAnchor="middle" fontSize="7" fontWeight="700" fill="#1ec71e" fontFamily="Liberation Sans">LINE</text>
        </Ic>
      </div>
      <Ic w={35} h={36} className="ml-[40px]">
        <path d="M26 0 L35 4 V32 L26 36 L0 26 L4 24 L26 30 Z" fill="#7a50b8" />
        <path d="M3 9 L8 7 L14 12 L26 4 V30 L14 21 L8 25 L3 23 Z M7 12 V20 L11 16 Z M15 16 L22 21 V11 Z" fill="#7a50b8" fillRule="evenodd" />
      </Ic>
      <Ic w={32} h={24} className="ml-[41px]">
        <rect width="32" height="24" fill="#2f9fe0" />
        <rect x="2" y="3" width="17" height="18" fill="#e8f4fb" />
        <path d="M10 6 A6 6 0 1 1 4 12 H10 Z" fill="#e8a030" />
        <rect x="21" y="4" width="9" height="4" fill="#cfe8f8" />
        <rect x="21" y="10" width="9" height="4" fill="#cfe8f8" />
        <rect x="21" y="16" width="9" height="4" fill="#cfe8f8" />
      </Ic>
      <Ic w={34} h={36} className="ml-[42px]">
        <path d="M16 6 C6 6 0 14 0 22 C0 30 7 32 10 30 C13 28 10 25 14 24 C18 23 22 26 24 24 C28 20 28 6 16 6 Z" fill="#e8e8e8" />
        <circle cx="8" cy="18" r="3" fill="#d04040" />
        <circle cx="14" cy="11" r="3" fill="#e8c030" />
        <circle cx="21" cy="13" r="3" fill="#40a040" />
        <circle cx="8" cy="25" r="2.5" fill="#4070d0" />
        <path d="M32 0 L20 36" stroke="#c08040" strokeWidth="3" />
      </Ic>
      <Ic w={34} h={36} className="ml-[40px]">
        <path d="M4 30 L14 0 L34 5 L30 34 Z" fill="#b8dce8" />
        <path d="M14 0 L34 5 L33 8 L13 3 Z" fill="#80a0b0" />
        <path d="M4 30 L30 34 L34 5 L36 8 L33 36 L6 33 Z" fill="#d0c090" />
      </Ic>
      <div className="ml-[23px] w-[67px] h-full shrink-0 bg-[#4d3f30] border-b-[3px] border-[#76b9ed] flex items-center justify-center">
        <Ic w={36} h={36}>
          <rect width="36" height="36" fill="#e2f2f1" />
          <path d="M5 24 V4 L18 18 L31 4 V24 H25 V13 L18 22 L11 13 V24 Z" fill="#1f8f9c" />
          <rect x="9" y="28" width="18" height="4" fill="#6eb4b8" />
        </Ic>
      </div>
      <div className="ml-px w-[5px] h-full shrink-0 bg-[#3a2c1c] border-b-[3px] border-[#76b9ed]" />
      <Ic w={19} h={10} className="ml-[292px]">
        <path d="M0.5 9.5 L9.5 0.5 L18.5 9.5" stroke="#fff" />
      </Ic>
      <Ic w={24} h={26} className="ml-[15px]">
        <rect x="1" y="1" width="20" height="16" fill="#281600" stroke="#fff" />
        <rect x="3" y="3" width="9" height="12" fill="#fff" />
        <ellipse cx="17" cy="19" rx="6" ry="7" fill="#10a040" />
        <path d="M17 14 V24" stroke="#fff" />
      </Ic>
      <Ic w={22} h={22} className="ml-[10px]">
        <circle cx="11" cy="11" r="11" fill="#8c8578" />
        <path d="M6.5 6.5 L15.5 15.5 M15.5 6.5 L6.5 15.5" stroke="#222" strokeWidth="2.4" />
      </Ic>
      <div className="ml-[14px] w-[92px] shrink-0 flex flex-col items-center text-[16.7px] leading-[29px] text-white">
        <span>18:01</span>
        <span className="whitespace-nowrap">2017/07/23</span>
      </div>
      <Ic w={36} h={38} className="ml-[25px]">
        <path d="M3 0 H27 V26 H10 L8 30 L3 26 Z" fill="#fff" />
        <path d="M8 7 H22 M8 12 H22 M8 17 H22" stroke="#281600" strokeWidth="1.5" />
        <circle cx="23" cy="25" r="12" fill="#3a3a3a" stroke="#aaa" />
        <text x="23" y="31" textAnchor="middle" fontSize="16" fill="#fff" fontFamily="Noto Sans">1</text>
      </Ic>
    </div>
  );
}

export default function App() {
  return (
    <div className="w-[1920px] h-[1200px] flex flex-col overflow-hidden bg-[#444444] font-['Noto_Sans','Noto_Sans_CJK_JP',sans-serif] [font-feature-settings:'palt']">
      <TitleBar />
      <MenuBar />
      <StatusLine />
      <div className="h-[4px] shrink-0 bg-[#373737]" />
      <Shelf />
      <div className="h-[708px] shrink-0 flex bg-[#3a3a3a] border-t-[4px] border-[#373737]">
        <ToolBox />
        <div className="w-[7px] shrink-0" />
        <Viewport />
        <AttributePanel />
        <SideTabs />
      </div>
      <div className="h-[3px] shrink-0 bg-[#373737]" />
      <TimeSlider />
      <div className="h-[4px] shrink-0 bg-[#373737]" />
      <RangeSlider />
      <div className="h-[4px] shrink-0 bg-[#373737]" />
      <CommandLine />
      <div className="h-[4px] shrink-0 bg-[#373737]" />
      <HelpLine />
      <Taskbar />
    </div>
  );
}
